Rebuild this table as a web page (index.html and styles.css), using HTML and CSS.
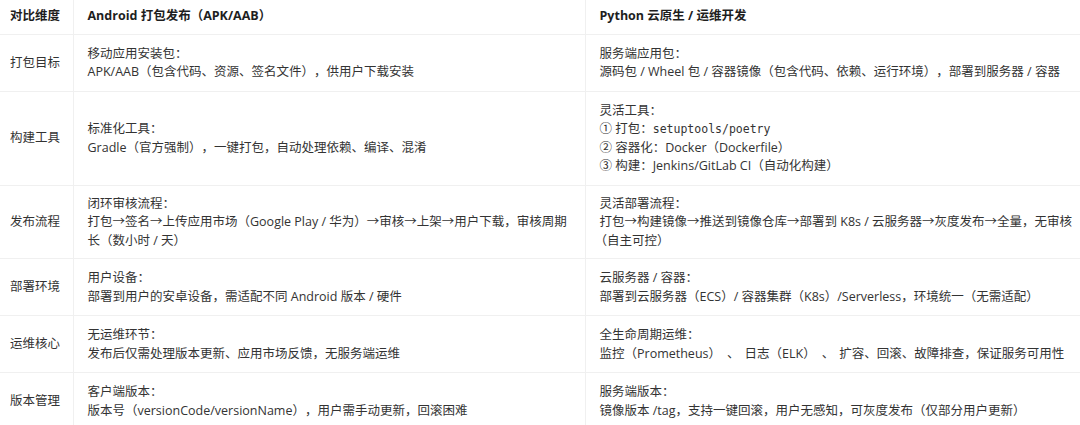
FILE: index.html
```html
<!DOCTYPE html>
<html lang="zh-CN">
<head>
<meta charset="utf-8">
<title>对比维度</title>
<link rel="stylesheet" href="styles.css">
</head>
<body>
<table class="cmp">
  <colgroup>
    <col class="c1"><col class="c2"><col class="c3">
  </colgroup>
  <thead>
    <tr>
      <th class="dim">对比维度</th>
      <th>Android 打包发布（APK/AAB）</th>
      <th>Python 云原生 / 运维开发</th>
    </tr>
  </thead>
  <tbody>
    <tr class="r1">
      <td class="dim">打包目标</td>
      <td>移动应用安装包：<br>APK/AAB（包含代码、资源、签名文件），供用户下载安装</td>
      <td>服务端应用包：<br>源码包 / Wheel 包 / 容器镜像（包含代码、依赖、运行环境），部署到服务器 / 容器</td>
    </tr>
    <tr class="r2">
      <td class="dim">构建工具</td>
      <td>标准化工具：<br>Gradle（官方强制），一键打包，自动处理依赖、编译、混淆</td>
      <td>灵活工具：<br>① 打包：<code>setuptools/poetry</code><br>② 容器化：Docker（Dockerfile）<br>③ 构建：Jenkins/GitLab CI（自动化构建）</td>
    </tr>
    <tr class="r3">
      <td class="dim">发布流程</td>
      <td>闭环审核流程：<br>打包→签名→上传应用市场（Google Play / 华为）→审核→上架→用户下载，审核周期<br>长（数小时 / 天）</td>
      <td>灵活部署流程：<br>打包→构建镜像→推送到镜像仓库→部署到 K8s / 云服务器→灰度发布→全量，无审核<br><span class="trim">（自主可控）</span></td>
    </tr>
    <tr class="r4">
      <td class="dim">部署环境</td>
      <td>用户设备：<br>部署到用户的安卓设备，需适配不同 Android 版本 / 硬件</td>
      <td>云服务器 / 容器：<br>部署到云服务器（ECS）/ 容器集群（K8s）/Serverless，环境统一（无需适配）</td>
    </tr>
    <tr class="r5">
      <td class="dim">运维核心</td>
      <td>无运维环节：<br>发布后仅需处理版本更新、应用市场反馈，无服务端运维</td>
      <td>全生命周期运维：<br>监控（Prometheus）<span class="sep">、</span>日志（ELK）<span class="sep">、</span>扩容、回滚、故障排查，保证服务可用性</td>
    </tr>
    <tr class="r6">
      <td class="dim">版本管理</td>
      <td>客户端版本：<br>版本号（versionCode/versionName），用户需手动更新，回滚困难</td>
      <td>服务端版本：<br>镜像版本 /tag，支持一键回滚，用户无感知，可灰度发布（仅部分用户更新）</td>
    </tr>
  </tbody>
</table>
</body>
</html>
```

FILE: styles.css
```css
html, body {
  margin: 0;
  padding: 0;
  background: #ffffff;
}

body {
  font-family: "Open Sans", "Noto Sans CJK SC", sans-serif;
  font-size: 12.5px;
  color: #333333;
  text-spacing-trim: space-all;
}

.cmp {
  width: 1080px;
  border-collapse: collapse;
  table-layout: fixed;
}

.c1 { width: 73px; }
.c2 { width: 512px; }
.c3 { width: 495px; }

.cmp th,
.cmp td {
  text-align: left;
  vertical-align: middle;
  border-right: 1px solid #f0f0f0;
  border-bottom: 1px solid #f0f0f0;
  padding: 10px 10px 9px 14px;
  line-height: 18.5px;
  white-space: nowrap;
}

.cmp th:last-child,
.cmp td:last-child {
  border-right: none;
}

.cmp th {
  font-weight: 700;
  color: #1e1e1e;
  height: 34px;
  box-sizing: border-box;
  padding-top: 7px;
  padding-bottom: 8px;
}

.cmp .dim {
  padding-left: 10px;
  padding-right: 0;
}

.cmp .r3 td {
  padding-top: 9px;
  padding-bottom: 8px;
}

.cmp .trim {
  margin-left: -5px;
}

.cmp .sep {
  padding: 0 5px 0 6px;
}

.cmp code {
  font-family: "DejaVu Sans Mono", "Liberation Mono", monospace;
  font-size: 11.5px;
  color: #333333;
}
```
